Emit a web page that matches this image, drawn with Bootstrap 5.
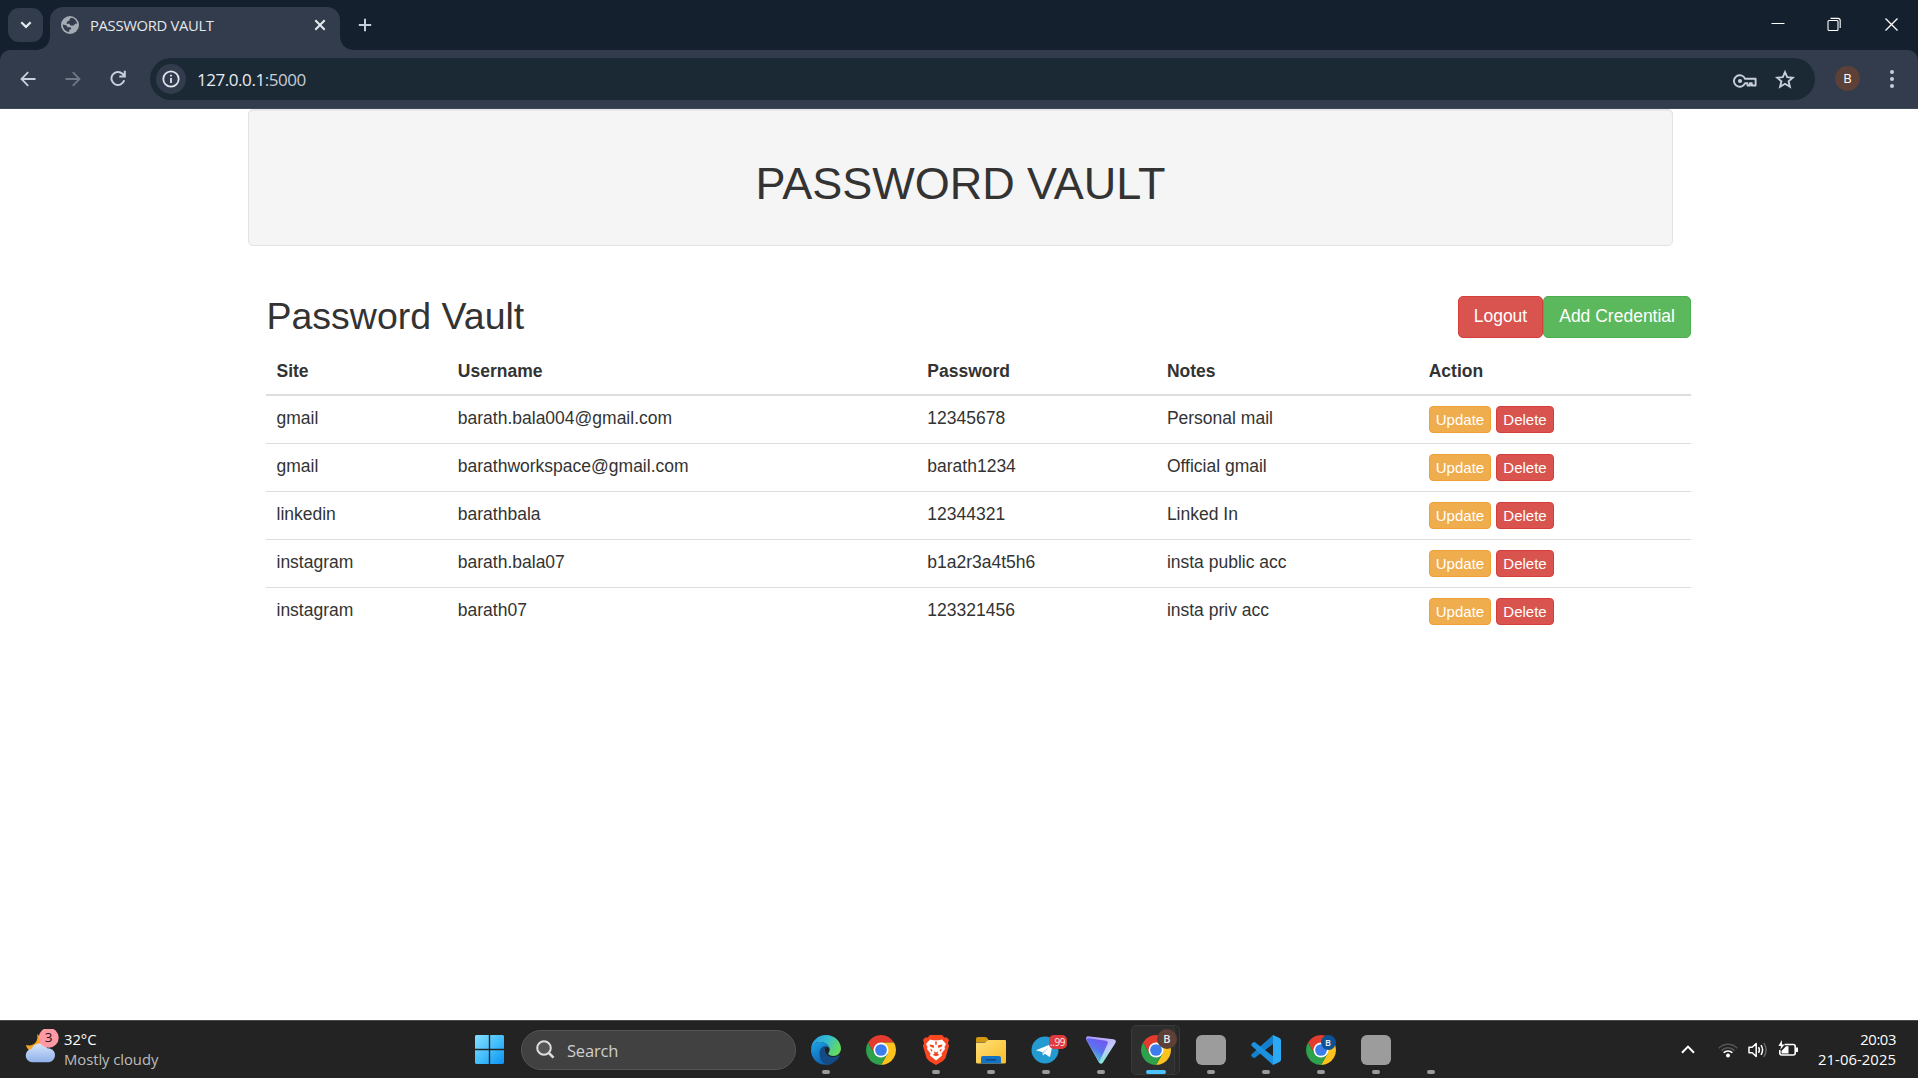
<!DOCTYPE html>
<html lang="en">
<head>
<meta charset="utf-8">
<title>PASSWORD VAULT</title>
<link href="https://cdn.jsdelivr.net/npm/bootstrap@5.3.0/dist/css/bootstrap.min.css" rel="stylesheet">
<style>
html,body{height:100%}
body{font-family:"Liberation Sans",Arial,sans-serif;font-size:17.5px;line-height:25px;color:#333;background:#fff;overflow:hidden}
svg{display:block;flex:none}
.chrome-ui,.taskbar{font-family:"Open Sans","Noto Sans",sans-serif}
.tabstrip{height:50px;background:#14202e}
.tab-list{width:35px;height:34px;margin:8px 7px 0 8px;border-radius:11px;background:#323c4c}
.tab{width:290px;height:43px;margin-top:7px;padding:0 10px 7px 11px;border-radius:13px 13px 0 0;background:#323c4c;color:#e3e8ee;font-size:14.8px;position:relative}
.tab::before,.tab::after{content:"";position:absolute;bottom:0;width:13px;height:13px}
.tab::before{left:-13px;background:radial-gradient(circle at 0 0,transparent 12.5px,#323c4c 13px)}
.tab::after{right:-13px;background:radial-gradient(circle at 100% 0,transparent 12.5px,#323c4c 13px)}
.tab-title{letter-spacing:-.33px;margin-left:11px}
.new-tab{margin:18px 0 0 18px}
.win-buttons{margin:17px 19px 0 0;gap:42px}
.win-buttons svg:nth-child(-n+2){transform:translateX(-1px)}
.toolbar-wrap{background:#14202e}
.toolbar{height:59px;background:#323c4c;border-radius:10px 10px 0 0;border-bottom:1px solid #414a57;padding:0 19px 1px 20px}
.nav-icons{width:130px;gap:29px}
.omnibox{height:42px;width:1665px;border-radius:21px;background:#1b2935;padding:0 20px 0 6px;color:#e8edf2;font-size:17px}
.info-dot{width:30px;height:30px;border-radius:50%;background:#323c4c}
.url{margin-left:11px;padding-top:1px;letter-spacing:-.45px}
.url span{color:#c5cdd5}
.avatar{width:25px;height:25px;margin-left:20px;border-radius:50%;background:#5d4037;color:#fff;font-size:13px;line-height:25px}
.page-area{height:911px}
.vault-box{width:1425px;margin-left:248px}
.well-box{height:137px;background:#f5f5f5;border:1px solid #e3e3e3;border-radius:5px;box-shadow:inset 0 1px 1px rgba(0,0,0,.05);padding-top:49px}
.well-box h1{font-size:45px;line-height:50px;font-weight:400;margin:0;letter-spacing:-.02px}
.list-box{width:1425px;margin:50px 0 0 266px}
.list-box h2{font-size:37.5px;line-height:41px;font-weight:400;margin:0;padding-left:.5px}
.btn{font-size:17.5px;line-height:25px;padding:7px 15px 8px;border-radius:5px;color:#fff!important;border-width:1px}
.btn-danger{background:#d9534f;border-color:#d43f3a}
.btn-success{background:#5cb85c;border-color:#4cae4c}
.btn-warning{background:#f0ad4e;border-color:#eea236}
.btn-sm{font-size:15px;line-height:23px;padding:1px 6.1px;border-radius:4px;height:27px;display:inline-block;vertical-align:top}
.table{table-layout:fixed;color:#333;--bs-table-color:#333;margin:9px 0 0}
.table>:not(caption)>*>*{padding:0 10px 0 10.5px;border:0;vertical-align:top}
.table thead th{height:48px!important;padding-top:12px!important;border-bottom:2px solid #ddd!important}
.table tbody td{height:48px;padding-top:10px!important;border-top:1px solid #ddd!important}
.table tbody tr:first-child td{border-top:0!important}
.action-cell{gap:5px}
.taskbar{height:58px;background:#232323;border-top:1px solid #4a4a4a;color:#fff;font-size:14.8px;line-height:20px}
.weather{width:475px;padding:8px 0 0 24px}
.weather-text{margin-left:4px;letter-spacing:-.04px}
.weather-text div+div{color:#bdbdbd}
.search-box{width:275px;height:40px;margin:0 2px 0 17px;border:1px solid #555;border-radius:20px;background:#414141;color:#cfcfcf;font-size:16.5px;padding-left:14px}
.search-box span{margin-left:12px;padding-top:2px;letter-spacing:-.2px}
.app{width:55px;height:57px;padding-top:14px;position:relative}
.app::after{content:"";position:absolute;left:23.5px;top:49px;width:8px;height:4px;border-radius:2px;background:#9a9a9a}
.app.idle::after{display:none}
.app.active::after{left:17.5px;width:20px;background:#4cc2ff}
.app.active::before{content:"";position:absolute;left:3px;top:4px;width:44px;height:50px;border-radius:5px;background:#2e2e2e;border:1px solid #393939;box-shadow:5px 0 0 -1px #292929,5px 0 0 0 #393939}
.app svg{position:relative;z-index:1}
.blank-app{width:30px;height:30px;border-radius:6px;background:#9c9c9c}
.corner-badge{position:absolute;z-index:2;border-radius:50%;text-align:center;color:#eee}
.cb-brown{width:20px;height:20px;left:29px;top:8px;background:#5d4037;font-size:11px;line-height:20px;font-weight:600}
.cb-blue{width:15px;height:15px;left:27.5px;top:14px;background:#0b5394;font-size:9px;line-height:15px;font-weight:600}
.cb-red{left:30.5px;top:14px;width:18px;height:14px;border-radius:5px;background:#e0393e;font-size:10px;line-height:14px;letter-spacing:-.4px}
.tray{margin-right:-1px}
.clock{margin:8px 22px 0 0;letter-spacing:.08px;width:98px}
.clock div:first-child{letter-spacing:-.4px}
</style>
<script src="https://cdn.jsdelivr.net/npm/bootstrap@5.3.0/dist/js/bootstrap.bundle.min.js"></script>
</head>
<body class="d-flex flex-column">
<svg width="0" height="0" class="position-absolute">
 <symbol id="chrome-logo" viewBox="2 2 44 44">
  <path fill="#e33b2e" d="M4.95 13A22 22 0 0 1 43.05 13H24L14.47 29.5Z"/>
  <path fill="#fcc31e" d="M43.05 13A22 22 0 0 1 24 46L33.53 29.5 24 13Z"/>
  <path fill="#2da14c" d="M24 46A22 22 0 0 1 4.95 13L14.47 29.5H33.53Z"/>
  <circle cx="24" cy="24" r="11" fill="#fff"/><circle cx="24" cy="24" r="8.6" fill="#3b7ded"/>
 </symbol>
</svg>

<header class="chrome-ui">
 <div class="tabstrip d-flex">
  <div class="tab-list d-flex align-items-center justify-content-center">
   <svg width="12" height="8" viewBox="0 0 12 8" fill="none" stroke="#e3e8ee" stroke-width="2.2"><path d="M1.3 1.2 6 5.9 10.7 1.2"/></svg>
  </div>
  <div class="tab d-flex align-items-center">
   <svg width="18" height="18" viewBox="0 0 18 18"><circle cx="9" cy="9" r="9" fill="#a4abb3"/><path fill="#323c4c" d="M10.8 1.8C8.6 2.2 8.2 3.6 8.6 4.6L6.2 5.6 5.4 7.8H8.4L9.6 9.6 12.8 9.4 14.2 7.4 16.1 8C15.9 5 13.7 2.4 10.8 1.8ZM1.8 8.6 5.2 9.2 6.6 11.2H9.4L10.4 13 8.2 13.8V16.1C4.6 15.8 1.8 12.6 1.8 8.6Z"/></svg>
   <span class="tab-title">PASSWORD VAULT</span>
   <svg class="ms-auto me-1" width="12" height="12" viewBox="0 0 12 12" stroke="#e9edf2" stroke-width="2"><path d="M1.3 1.3 10.7 10.7M10.7 1.3 1.3 10.7"/></svg>
  </div>
  <svg class="new-tab" width="14" height="14" viewBox="0 0 14 14" stroke="#c6cedb" stroke-width="2"><path d="M7 .8V13.2M.8 7H13.2"/></svg>
  <div class="win-buttons d-flex ms-auto">
   <svg width="14" height="14" viewBox="0 0 14 14" stroke="#fff"><path d="M.5 6.5H13.5"/></svg>
   <svg width="14" height="14" viewBox="0 0 14 14" fill="none" stroke="#fff" stroke-width="1.1"><rect x="1" y="3.5" width="10" height="10" rx="1"/><path d="M3.5 1.4H11Q13.2 1.4 13.2 3.6V11" /></svg>
   <svg width="15" height="15" viewBox="0 0 15 15" stroke="#fff" stroke-width="1.3"><path d="M1.5 1.5 13.5 13.5M13.5 1.5 1.5 13.5"/></svg>
  </div>
 </div>
 <div class="toolbar-wrap">
  <div class="toolbar d-flex align-items-center">
   <div class="nav-icons d-flex align-items-center">
    <svg width="16" height="16" viewBox="0 0 16 16" fill="none" stroke="#c6cfdc" stroke-width="1.8"><path d="M15.5 8H1.8M8.2 1.2 1.5 8 8.2 14.8"/></svg>
    <svg width="16" height="16" viewBox="0 0 16 16" fill="none" stroke="#707885" stroke-width="1.8"><path d="M.5 8H14.2M7.8 1.2 14.5 8 7.8 14.8"/></svg>
    <svg width="17" height="17" viewBox="0 0 17 17" fill="none" stroke="#c6cfdc" stroke-width="2"><path d="M14.2 10.2A6.5 6.5 0 1 1 12.5 3.8L14.5 5.8M14.8 .8V6.4H9.3"/></svg>
   </div>
   <div class="omnibox d-flex align-items-center">
    <div class="info-dot d-flex align-items-center justify-content-center">
     <svg width="18" height="18" viewBox="0 0 18 18"><circle cx="9" cy="9" r="7.7" fill="none" stroke="#e0e5ec" stroke-width="1.8"/><path d="M8.1 8H9.9V13H8.1ZM8.1 4.8H9.9V6.6H8.1Z" fill="#e0e5ec"/></svg>
    </div>
    <div class="url">127.0.0.1<span>:5000</span></div>
    <svg class="ms-auto mt-1" width="24" height="14" viewBox="0 0 24 14" fill="none" stroke="#c6cfda" stroke-width="1.9" stroke-linejoin="round"><path d="M12.1 4.8H22.6V11.5H18.8V9.3H17V11.5H14.5V9.2H12.1A5.8 5.8 0 1 1 12.1 4.8Z"/><circle cx="7" cy="7" r="2.1" fill="#c6cfda" stroke="none"/></svg>
    <svg class="ms-3" width="22" height="20" viewBox="-2 -1 22 20" fill="none" stroke="#c6cfda" stroke-width="1.9"><path d="M10 2.2 12.2 7.2 17.8 7.7 13.6 11.3 14.9 16.7 10 13.8 5.1 16.7 6.4 11.3 2.2 7.7 7.8 7.2Z"/></svg>
   </div>
   <div class="avatar text-center">B</div>
   <svg class="ms-auto" width="14" height="18" viewBox="0 0 14 18" fill="#c6cfdc"><circle cx="7" cy="2" r="2"/><circle cx="7" cy="9" r="2"/><circle cx="7" cy="16" r="2"/></svg>
  </div>
 </div>
</header>

<main class="page-area">
 <div class="vault-box well-box text-center"><h1>PASSWORD VAULT</h1></div>
 <section class="list-box">
  <div class="d-flex justify-content-between align-items-start">
   <h2>Password Vault</h2>
   <div class="d-flex"><a class="btn btn-danger">Logout</a><a class="btn btn-success">Add Credential</a></div>
  </div>
  <table class="table">
   <colgroup><col style="width:181.3px"><col style="width:469.5px"><col style="width:239.6px"><col style="width:261.8px"><col></colgroup>
   <thead><tr><th>Site</th><th>Username</th><th>Password</th><th>Notes</th><th>Action</th></tr></thead>
   <tbody>
    <tr><td>gmail</td><td>barath.bala004@gmail.com</td><td>12345678</td><td>Personal mail</td><td><div class="action-cell d-flex"><a class="btn btn-warning btn-sm">Update</a><a class="btn btn-danger btn-sm">Delete</a></div></td></tr>
    <tr><td>gmail</td><td>barathworkspace@gmail.com</td><td>barath1234</td><td>Official gmail</td><td><div class="action-cell d-flex"><a class="btn btn-warning btn-sm">Update</a><a class="btn btn-danger btn-sm">Delete</a></div></td></tr>
    <tr><td>linkedin</td><td>barathbala</td><td>12344321</td><td>Linked In</td><td><div class="action-cell d-flex"><a class="btn btn-warning btn-sm">Update</a><a class="btn btn-danger btn-sm">Delete</a></div></td></tr>
    <tr><td>instagram</td><td>barath.bala07</td><td>b1a2r3a4t5h6</td><td>insta public acc</td><td><div class="action-cell d-flex"><a class="btn btn-warning btn-sm">Update</a><a class="btn btn-danger btn-sm">Delete</a></div></td></tr>
    <tr><td>instagram</td><td>barath07</td><td>123321456</td><td>insta priv acc</td><td><div class="action-cell d-flex"><a class="btn btn-warning btn-sm">Update</a><a class="btn btn-danger btn-sm">Delete</a></div></td></tr>
   </tbody>
  </table>
 </section>
</main>

<footer class="taskbar d-flex">
 <div class="weather d-flex">
  <svg width="36" height="38" viewBox="0 0 36 38">
   <defs><linearGradient id="cloud" x2="0" y2="1"><stop stop-color="#d6e5fb"/><stop offset="1" stop-color="#8fb1ea"/></linearGradient></defs>
   <path d="M13 5C15 12 10 18 2 16 3 21 9 25 15 22 20 19 19 9 13 5Z" fill="#f6a623"/>
   <path d="M8 34A6.8 6.8 0 0 1 8 20.5 8.5 8.5 0 0 1 23.6 20 7 7 0 0 1 25 34Z" transform="translate(-.3 -.7)" fill="url(#cloud)"/>
   <circle cx="24.7" cy="8.8" r="10" fill="#ff99a4"/><text x="24.5" y="13.4" text-anchor="middle" font-size="13.5" fill="#221518">3</text>
  </svg>
  <div class="weather-text"><div>32°C</div><div>Mostly cloudy</div></div>
 </div>
 <div class="d-flex align-items-center">
  <svg width="29" height="29" viewBox="0 0 29 29"><defs><linearGradient id="win" gradientUnits="userSpaceOnUse" x1="0" y1="0" x2="29" y2="29"><stop stop-color="#86dfff"/><stop offset=".55" stop-color="#3fbcfb"/><stop offset="1" stop-color="#0b90f3"/></linearGradient></defs><path fill="url(#win)" d="M1 0H13.8V13.8H0V1ZM15.2 0H28L29 1V13.8H15.2ZM0 15.2H13.8V29H1L0 28ZM15.2 15.2H29V28L28 29H15.2Z"/></svg>
  <div class="search-box d-flex align-items-center">
   <svg width="19" height="19" viewBox="0 0 19 19" fill="#555" stroke="#ddd" stroke-width="2"><circle cx="8" cy="8" r="6.8"/><path d="M12.8 12.8 17.5 17.6" stroke-width="2.6"/></svg><span>Search</span>
  </div>
 </div>
 <div class="d-flex">
  <div class="app d-flex justify-content-center">
   <svg width="30" height="30" viewBox="0 0 30 30"><defs><linearGradient id="edge-top" y2=".4"><stop stop-color="#2393e6"/><stop offset=".55" stop-color="#36bdd0"/><stop offset="1" stop-color="#62da62"/></linearGradient><linearGradient id="edge-left" x2=".5" y2="1"><stop stop-color="#1ea5e9"/><stop offset="1" stop-color="#0f5fae"/></linearGradient></defs>
    <path fill="url(#edge-top)" d="M0 15C0 6 7 0 15 0 24 0 30 7 30 13.5 30 18 26.5 21 22.5 21 19.5 21 17.3 19.8 17.3 18.5 17.3 17.8 18.7 16.8 18.7 14.5 18.7 10 14 7 9 7 4.5 7 1 10 0 15Z"/>
    <path fill="url(#edge-left)" d="M0 15C1 9 5 7 9.5 7 14.5 7 18.7 10.5 18.7 14.5 18 11.5 14 10.5 11.5 13 8 17 10 27 20 29 9 32.5 0 25 0 15Z"/>
    <path fill="#124b86" d="M8.5 19C8.3 14 11 11 15 11 12.5 15 15 21.2 20.5 22 23.5 22.4 26 21.2 27.6 20.2 28.6 19.8 28.8 21 28.2 22 25.8 26 21 29.7 16.5 29.7 11 28 8.7 24 8.5 19Z"/></svg></div>
  <div class="app idle d-flex justify-content-center"><svg width="30" height="30"><use href="#chrome-logo"/></svg></div>
  <div class="app d-flex justify-content-center">
   <svg width="26" height="30" viewBox="0 0 26 30"><path fill="#fb4622" d="M7 0H19L21.5 2.5 24 2.4 26 5 25 8 26 11 22.5 23 20 26 13 30 6 26 3.5 23 0 11 1 8 0 5 2 2.4 4.5 2.5Z"/><path fill="#fff" d="M7 4.5 10 5.2H16L19 4.5 23 9 21.5 12 22 14 18.5 18.5 19 20.5 13 25.5 7 20.5 7.5 18.5 4 14 4.5 12 3 9Z"/><path fill="#f4431f" d="M6.5 9.5 11 10.3 10.7 13 7.4 11.7ZM19.5 9.5 15 10.3 15.3 13 18.6 11.7ZM10.8 16.3 13 17.4 15.2 16.3 14.4 18.5 16.3 20 13 21.2 9.7 20 11.6 18.5ZM7 13.5 9.5 15 8.5 17ZM19 13.5 16.5 15 17.5 17ZM12 6.5H14L13.5 10H12.5Z"/></svg></div>
  <div class="app d-flex justify-content-center">
   <svg width="30" height="30" viewBox="0 0 30 30"><defs><linearGradient id="folder" x2="1" y2="1"><stop stop-color="#ffe07a"/><stop offset="1" stop-color="#f8bd28"/></linearGradient></defs><path fill="#d69a12" d="M0 4Q0 2 2 2H9Q11 2 12 4L13.5 7H0Z"/><path fill="url(#folder)" d="M0 7.5 9 7.5 12.5 5H29Q30 5 30 6V27Q30 28.5 28.5 28.5H1.5Q0 28.5 0 27Z"/><path fill="#1673c4" d="M5 28.5V23Q5 21 7 21H23Q25 21 25 23V28.5Z"/><path d="M10 24.8H20" stroke="#0c4a86" stroke-width="1.5"/></svg></div>
  <div class="app d-flex justify-content-center">
   <svg width="30" height="30" viewBox="0 0 30 30"><circle cx="14" cy="15" r="13.5" fill="#239bd1"/><path fill="#fff" d="M5 15.2 20.8 8.8Q21.8 8.5 21.6 9.8L19.2 21Q18.9 22 17.8 21.4L14 18.7 12 20.6 11.5 17.2Z"/><path d="M11.5 17.2 18 11.8 13 17.5 12 20.6Z" fill="#a9cfe4"/></svg>
   <span class="corner-badge cb-red">..99</span></div>
  <div class="app d-flex justify-content-center">
   <svg width="30" height="30" viewBox="0 0 30 30"><defs><linearGradient id="vpn-a" x1=".2" x2=".7" y2="1"><stop stop-color="#b09bff"/><stop offset=".55" stop-color="#c4caff"/><stop offset="1" stop-color="#6ff0c8"/></linearGradient><linearGradient id="vpn-b" x1="1" x2=".5" y2="1"><stop stop-color="#7b4df5"/><stop offset=".6" stop-color="#5876ed"/><stop offset="1" stop-color="#55c9d7"/></linearGradient></defs><path fill="url(#vpn-a)" d="M1.8 1.2 27.5 4.2Q31 5 29.4 8L17 27.5Q15 30 13 27.5L.4 5Q-.6 1.5 1.8 1.2Z"/><path fill="url(#vpn-b)" d="M.3 4.6Q.5 2.8 3.5 3.2L20 5.8Q22.5 6.5 21.5 9L13.2 27.2Z"/></svg></div>
  <div class="app active d-flex justify-content-center"><svg width="30" height="30"><use href="#chrome-logo"/></svg><span class="corner-badge cb-brown">B</span></div>
  <div class="app d-flex justify-content-center"><div class="blank-app"></div></div>
  <div class="app d-flex justify-content-center">
   <svg width="30" height="30" viewBox="0 0 30 30"><path fill="#1480cb" d="M22 0V9L4 22.7Q3 23.4 2 22.6L.6 21.2Q-.3 20 .8 19Z"/><path fill="#1b91df" d="M22 30V21.2L4 7.3Q3 6.6 2 7.4L.6 8.8Q-.3 10 .8 11Z"/><path fill="#2ba9f4" d="M22 0 28.5 3Q30 3.8 30 5.3V24.7Q30 26.2 28.5 27L22 30Z"/></svg></div>
  <div class="app d-flex justify-content-center"><svg width="30" height="30"><use href="#chrome-logo"/></svg><span class="corner-badge cb-blue">B</span></div>
  <div class="app d-flex justify-content-center"><div class="blank-app"></div></div>
  <div class="app"></div>
 </div>
 <div class="tray d-flex align-items-center ms-auto">
  <svg width="14" height="9" viewBox="0 0 14 9" fill="none" stroke="#fff" stroke-width="2"><path d="M1 7.8 7 1.6 13 7.8"/></svg>
  <svg style="margin-left:23px" width="20" height="16" viewBox="0 0 20 16" fill="none" stroke-width="1.6"><path d="M.8 6.2A12.6 12.6 0 0 1 19.2 6.2M3.4 8.6A9.2 9.2 0 0 1 16.6 8.6" stroke="#555"/><path d="M5.6 10.8A6.2 6.2 0 0 1 14.4 10.8" stroke="#fff"/><circle cx="10" cy="13.6" r="2" fill="#fff"/></svg>
  <svg style="margin-left:10px" width="20" height="18" viewBox="0 0 20 18" fill="none" stroke="#fff" stroke-width="1.5"><path d="M1 6.3H4.2L8.2 2.5V15.5L4.2 11.7H1Z" stroke-linejoin="round"/><path d="M10.5 6.2Q12.3 9 10.5 11.8M13 4.2Q16.2 9 13 13.8"/><path d="M15.8 2.2Q20.4 9 15.8 15.8" stroke="#666"/></svg>
  <svg style="margin:0 0 3px 10px" width="21" height="17" viewBox="0 0 21 17"><path d="M6.5 4.5H15.2Q17.2 4.5 17.2 6.5V13Q17.2 15 15.2 15H3.8Q1.8 15 1.8 13V10" fill="none" stroke="#fff" stroke-width="1.6"/><path d="M18 7.5H20V12H18ZM3.5 13.5V11L8 6.3H10.5V13.5Z" fill="#fff"/><path d="M3.8 0 .5 6H3.2L2.2 10 6.5 4.5H4Z" fill="#fff"/></svg>
 </div>
 <div class="clock text-end"><div>20:03</div><div>21-06-2025</div></div>
</footer>
</body>
</html>
